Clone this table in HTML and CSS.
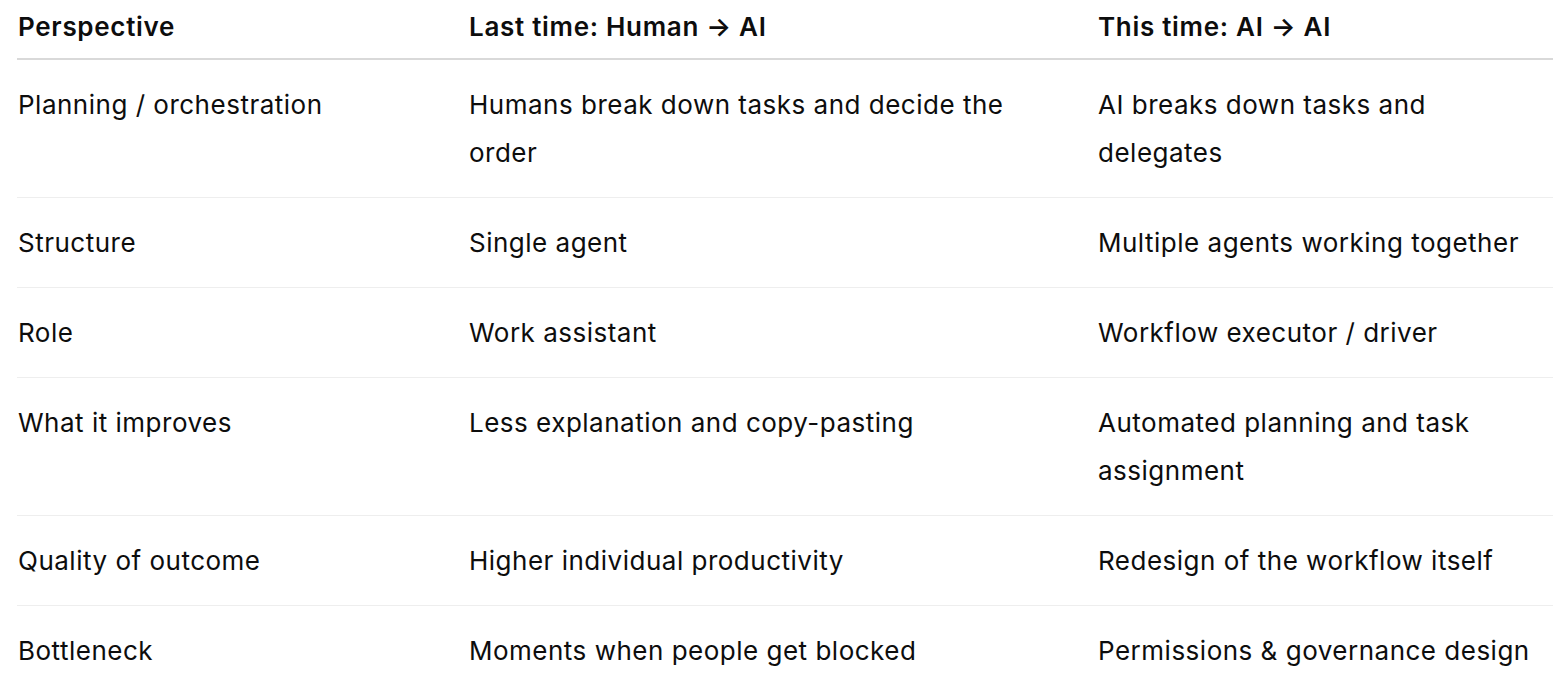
FILE: index.html
```html
<!DOCTYPE html>
<html lang="en">
<head>
<meta charset="utf-8">
<link rel="stylesheet" href="styles.css">
</head>
<body>
<div class="table">
  <div class="row head">
    <div class="cell">Perspective</div>
    <div class="cell">Last time: Human → AI</div>
    <div class="cell">This time: AI → AI</div>
  </div>
  <div class="row">
    <div class="cell">Planning / orchestration</div>
    <div class="cell">Humans break down tasks and decide the order</div>
    <div class="cell">AI breaks down tasks and delegates</div>
  </div>
  <div class="row">
    <div class="cell">Structure</div>
    <div class="cell">Single agent</div>
    <div class="cell">Multiple agents working together</div>
  </div>
  <div class="row">
    <div class="cell">Role</div>
    <div class="cell">Work assistant</div>
    <div class="cell">Workflow executor / driver</div>
  </div>
  <div class="row">
    <div class="cell">What it improves</div>
    <div class="cell">Less explanation and copy-pasting</div>
    <div class="cell">Automated planning and task assignment</div>
  </div>
  <div class="row">
    <div class="cell">Quality of outcome</div>
    <div class="cell">Higher individual productivity</div>
    <div class="cell">Redesign of the workflow itself</div>
  </div>
  <div class="row last">
    <div class="cell">Bottleneck</div>
    <div class="cell">Moments when people get blocked</div>
    <div class="cell">Permissions &amp; governance design</div>
  </div>
</div>
</body>
</html>
```
FILE: styles.css
```css
html, body {
  margin: 0;
  padding: 0;
  background: #ffffff;
}
body {
  font-family: Inter, "Noto Sans", sans-serif;
  color: #0d0d0d;
  font-size: 26px;
  line-height: 48px;
  letter-spacing: 0.5px;
}
.table {
  margin: 0 3px 0 17px;
}
.row {
  display: grid;
  grid-template-columns: 452px 629px 1fr;
  border-bottom: 1px solid #eeeeee;
  padding: 20.5px 0;
}
.row.head {
  font-weight: 600;
  letter-spacing: 0.7px;
  border-bottom: 2px solid #d9d9d9;
  padding: 3px 0 7px;
}
.row.last {
  border-bottom: none;
}
.cell {
  padding-right: 20px;
}
.cell:first-child {
  padding-left: 1px;
}
.cell:nth-child(2) {
  padding-right: 60px;
}
```
